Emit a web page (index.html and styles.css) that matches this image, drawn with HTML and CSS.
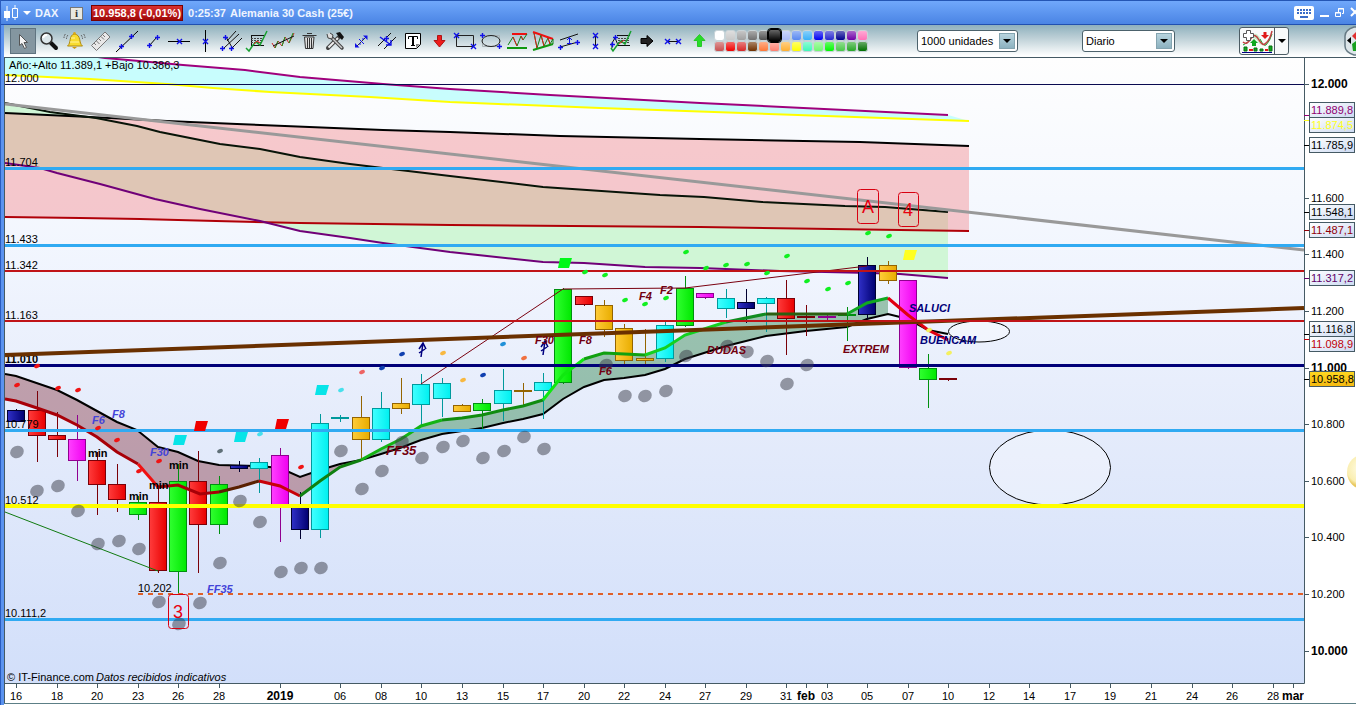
FILE: index.html
```html
<!DOCTYPE html>
<html lang="es">
<head>
<meta charset="utf-8">
<title>DAX - Alemania 30 Cash (25€)</title>
<link rel="stylesheet" href="styles.css">
</head>
<body>
<svg class="defs" width="0" height="0" aria-hidden="true">
  <defs>
    <g id="plus"><path d="M-2 .5H3M.5-2V3" stroke="#1010e8" stroke-width="1.400"/></g>
    <g id="cross"><path d="M-2-2L3 3M3-2L-2 3" stroke="#1010e8" stroke-width="1.400"/></g>
  </defs>
</svg>
<div class="window">
  <header class="titlebar">
    <svg class="logo" viewBox="0 0 18 18"><path d="M4 2v15M12 1v15" stroke="#fff"/><path d="M1 7h6v7H1z" fill="#fff"/><path d="M9.500 4.500h5v9h-5z" fill="#6098ee" stroke="#fff"/></svg>
    <button class="symbol" type="button"><span class="caret"></span>DAX</button>
    <button class="info" type="button" aria-label="Información">i</button>
    <strong class="quote">10.958,8 (-0,01%)</strong>
    <h1 class="title"><time>0:25:37</time> Alemania 30 Cash (25€)</h1>
    <div class="controls">
      <button type="button" class="keys" aria-label="Teclado"><svg viewBox="0 0 20 14"><rect width="20" height="14" rx="2" fill="#fff"/><path d="M3 4h14M3 7h14" stroke="#3a6cc8" stroke-width="2" stroke-dasharray="2 1"/><path d="M6 11h8" stroke="#3a6cc8" stroke-width="2"/></svg></button>
      <button type="button" aria-label="Minimizar"><svg viewBox="0 0 12 14"><path d="M1 10h9" stroke="#fff" stroke-width="2"/></svg></button>
      <button type="button" aria-label="Restaurar"><svg viewBox="0 0 12 14"><path d="M4.500 6V2.500h5v5H8M4 3h6M1.500 6.500h5v4h-5zM1 7h6" fill="none" stroke="#fff"/></svg></button>
      <button type="button" aria-label="Cerrar"><svg viewBox="0 0 12 14"><path d="M2 2l8 8M10 2L2 10" stroke="#fff" stroke-width="2"/></svg></button>
    </div>
  </header>

  <div class="frame">
  <nav class="toolbar" aria-label="Herramientas">
    <div class="tools">
      <button class="active" type="button" aria-label="Puntero"><svg viewBox="0 0 26 26"><path d="M9.500 6.500v11l2.500-2 2.500 5 2-1-2.500-5h3.500z" fill="#f4f4f4" stroke="#555"/></svg></button>
      <button type="button" aria-label="Zoom"><svg viewBox="0 0 26 26"><path d="M15 15l5 5" stroke="#111" stroke-width="4" stroke-linecap="round"/><circle cx="10.500" cy="10.500" r="5.500" fill="#dbe6ea" stroke="#333" stroke-width="1.500"/><path d="M7 10a4 4 0 014-3" stroke="#fff" stroke-width="2" fill="none"/></svg></button>
      <button type="button" aria-label="Alarma"><svg viewBox="0 0 26 26"><path d="M12.500 6c-6 1-3 9-7 12h15c-4-3-1-11-8-12z" fill="#f8dc30" stroke="#b08a10"/><path d="M8 14h9M9 10h4" stroke="#fff3a0"/><path d="M10 19h5l-2.500 2z" fill="#d09a10"/><circle cx="12.500" cy="5.500" r="1.500" fill="#d8a818"/><path d="M6 7q-1.500 1.500-1.500 4M3.500 6Q2 7.500 2 10M19 7q1.500 1.500 1.500 4M21.500 6q1.500 1.500 1.500 4" fill="none" stroke="#555" stroke-dasharray="2 1"/></svg></button>
      <button type="button" aria-label="Regla"><svg viewBox="0 0 26 26"><path d="M3.500 17.500L17 4l5 5L8.500 22.500z" fill="#e8e8e8" stroke="#777"/><path d="M6 15l2 2M8.500 13l3 3M11 11l2 2M13 8.500l3 3M15 7l2 2" stroke="#777"/></svg></button>
      <button type="button" aria-label="Recta"><svg viewBox="0 0 26 26"><path d="M2 24L24 3" stroke="#000"/><use href="#plus" x="7" y="18"/><use href="#plus" x="17" y="8"/></svg></button>
      <button type="button" aria-label="Segmento"><svg viewBox="0 0 26 26"><path d="M9 18l8-9" stroke="#000"/><use href="#plus" x="9" y="17"/><use href="#plus" x="17" y="9"/></svg></button>
      <button type="button" aria-label="Horizontal"><svg viewBox="0 0 26 26"><path d="M2 13.500h22" stroke="#000"/><use href="#cross" x="13" y="13"/></svg></button>
      <button type="button" aria-label="Vertical"><svg viewBox="0 0 26 26"><path d="M13.500 2v22" stroke="#000"/><use href="#cross" x="13" y="13"/></svg></button>
      <button type="button" aria-label="Tridente"><svg viewBox="0 0 26 26"><path d="M9 13L18 3M6 20L21 6M14 20L24 10M8 9l7 12" stroke="#111"/><use href="#plus" x="7" y="9"/><use href="#plus" x="4" y="20"/><use href="#plus" x="13" y="20"/></svg></button>
      <button type="button" aria-label="Regresión"><svg viewBox="0 0 26 26"><path d="M7 7.500h13M7 17.500h13M7.500 7v11" stroke="#111"/><path d="M7 10.500h12M7 12.500h12M7 14.500h12" stroke="#444" stroke-dasharray="2 1"/><path d="M2 20l3 3 4-6 3-3 4 3 7-14" fill="none" stroke="#18a030" stroke-width="1.500"/><path d="M10 16l3-3 3 2" stroke="#e02020" fill="none"/></svg></button>
      <button type="button" aria-label="Tendencia"><svg viewBox="0 0 26 26"><path d="M2 15l3 5 3-7 4 5 3-9 4 6 5-10" fill="none" stroke="#d42020"/><path d="M5 20l3-7M12 18l3-9M19 15l4-10" stroke="#149a20"/><path d="M3 18L24 8" stroke="#111"/></svg></button>
      <button type="button" aria-label="Papelera"><svg viewBox="0 0 26 26"><path d="M8.500 9h9.500l-1 11.500H9.500z" fill="#e0e0e0" stroke="#333"/><path d="M6.500 7.500h14M11 5.500h5M11.500 10v10M13.500 10v10M15.500 10v10" stroke="#333"/></svg></button>
      <button type="button" aria-label="Ajustes"><svg viewBox="0 0 26 26"><path d="M6 20L17 9" stroke="#444" stroke-width="4" stroke-linecap="round"/><path d="M6.500 19.500L16 10" stroke="#f0f0f0" stroke-width="2"/><path d="M9 9l11 11" stroke="#444" stroke-width="3.500" stroke-linecap="round"/><path d="M9 9l11 11" stroke="#ccc" stroke-width="1.500"/><path d="M5 6l1 4 4 1 1-4-3-2" fill="#ddd" stroke="#444"/><path d="M14 5l4-1 4 5-2 3-3-3z" fill="#111"/></svg></button>
      <button type="button" aria-label="Unir"><svg viewBox="0 0 26 26"><path d="M9 18l9-9" stroke="#333"/><path d="M7 15v4.500h4.500zM19.500 12V7.500H15z" fill="#1010e8"/><path d="M11 11l5 5M16 11h-2M11 16h2" stroke="#1010e8"/></svg></button>
      <button type="button" aria-label="Paralelas"><svg viewBox="0 0 26 26"><path d="M4 18L17 5M10 21L22 9" stroke="#111"/><path d="M6 9l11 8M17 12v5h-5" stroke="#1010e8" stroke-width="1.400" fill="none"/><use href="#plus" x="12" y="10"/></svg></button>
      <button type="button" aria-label="Texto"><svg viewBox="0 0 26 26"><path d="M5.500 5.500h15v11l-4 4h-11z" fill="#fff" stroke="#000"/><path d="M20 16h-4v4z" fill="#888"/><path d="M8.500 11V8.500h9V11M11 17.500h4" fill="none" stroke="#000"/><path d="M13 8v9.500" stroke="#000" stroke-width="2"/></svg></button>
      <button type="button" aria-label="Flecha abajo"><svg viewBox="0 0 26 26"><path d="M11.500 7.500h4v5H19L13.500 19 8 12.500h3.500z" fill="#ee1c1c" stroke="#b01414"/></svg></button>
      <button type="button" aria-label="Rectángulo"><svg viewBox="0 0 26 26"><path d="M4.500 7.500h17v11h-17z" fill="none" stroke="#222"/><use href="#cross" x="4" y="7"/><use href="#cross" x="21" y="18"/></svg></button>
      <button type="button" aria-label="Elipse"><svg viewBox="0 0 26 26"><path d="M4.500 7.500h17v11h-17z" fill="none" stroke="#aab4b8"/><ellipse cx="13" cy="13" rx="9" ry="5.500" fill="none" stroke="#222"/><use href="#plus" x="4" y="7"/><use href="#plus" x="21" y="18"/></svg></button>
      <button type="button" aria-label="Soporte"><svg viewBox="0 0 26 26"><path d="M8 6h15" stroke="#f01010" stroke-width="2"/><path d="M3 20h20" stroke="#109810" stroke-width="2"/><path d="M4 17l5-8 4 9 4-10 2 4 4-6" fill="none" stroke="#108018"/><path d="M9 9l4 9M17 8l2 4" stroke="#e01818"/></svg></button>
      <button type="button" aria-label="Triángulo"><svg viewBox="0 0 26 26"><path d="M3 4l20 7" stroke="#f01010" stroke-width="2"/><path d="M3 22l20-6" stroke="#109810" stroke-width="2"/><path d="M4 5l3 15 4-13 3 11 4-8 2 6 3-5v5" fill="none" stroke="#108018"/><path d="M4 5l3 15M11 7l3 11M18 10l2 6" stroke="#e01818"/></svg></button>
      <button type="button" aria-label="Canal"><svg viewBox="0 0 26 26"><path d="M4 12L22 6M4 19l18-5" stroke="#111"/><use href="#plus" x="4" y="19"/><use href="#plus" x="21" y="14"/><path d="M13.500 10v6M11 12l2.500-2.500L16 12M11 15.500h5" fill="none" stroke="#1010e8"/></svg></button>
      <button type="button" aria-label="Medida vertical"><svg viewBox="0 0 26 26"><path d="M13.500 7v12" stroke="#111"/><use href="#cross" x="13" y="7"/><use href="#cross" x="13" y="18"/></svg></button>
      <button type="button" aria-label="Estudio"><svg viewBox="0 0 26 26"><path d="M4 20V15l3-5 3 7M9 7.500h13M9 17.500h13" stroke="#111" fill="none"/><path d="M10 10.500h12M10 12.500h12M10 14.500h12" stroke="#444" stroke-dasharray="2 1"/><path d="M3 20l2 3 5-7 3-3 4 3 6-13" fill="none" stroke="#18a030" stroke-width="1.500"/><path d="M11 16l5-4" stroke="#e02020"/><use href="#plus" x="7" y="9"/><use href="#plus" x="4" y="16"/></svg></button>
      <button type="button" aria-label="Flecha derecha"><svg viewBox="0 0 26 26"><path d="M7 10.500h6V7.500l6 5.500-6 5.500v-3H7z" fill="#222" stroke="#000"/></svg></button>
      <button type="button" aria-label="Medida horizontal"><svg viewBox="0 0 26 26"><path d="M7 13.500h12" stroke="#111"/><use href="#cross" x="7" y="13"/><use href="#cross" x="18" y="13"/></svg></button>
      <button type="button" aria-label="Flecha arriba"><svg viewBox="0 0 26 26"><path d="M11.500 18.500h4v-6H19L13.500 6.500 8 12.500h3.500z" fill="#28dc28" stroke="#28c828"/></svg></button>
    </div>
    <div class="palette" id="palette"></div>
    <label class="combo units"><select aria-label="Unidades"><option>1000 unidades</option></select><span class="drop"></span></label>
    <label class="combo period"><select aria-label="Periodo"><option>Diario</option></select><span class="drop"></span></label>
    <div class="split">
      <button type="button" aria-label="Añadir indicador"><svg viewBox="0 0 34 26"><path d="M3 17q6-2 10-9t10 9q5-1 9-12-1 8-6 12-6 2-9-5-5-4-7 0t-7 5z" fill="#c8ecc8"/><path d="M3 17q6-2 9-8M20 11q4 8 6 6 4-4 6-11" fill="none" stroke="#18a030"/><path d="M3 14q4 4 9-5 3-4 7 3t7 3q4-3 6-12" fill="none" stroke="#c04040" stroke-width="1.500"/><path d="M6.500 2.500h4v3h3v4h-3v3h-4v-3h-3v-4h3z" fill="#fff" stroke="#555"/><path d="M12 18v-3h-2l4-4 4 4h-2v3z" fill="#10a820"/><path d="M23.500 4h3v3H29l-4 4-4-4h2.500z" fill="#e01818"/><path d="M4 23v-4h3v4zM14 23v-3h3v3zM20 23v-2h3v2zM29 23v-5h3v5z" fill="#10a820" stroke="#087010"/><path d="M9 21h4v2H9zM25 21h3v2h-3z" fill="#e01818"/><path d="M2 24.500h30" stroke="#000080"/></svg></button>
      <button type="button" class="more" aria-label="Más indicadores"><span class="caret dark"></span></button>
    </div>
    <button class="side" type="button" aria-label="Panel lateral"><svg viewBox="0 0 30 30"><path d="M10 1h20v28H10Q1 26 1 20V10Q1 4 10 1z" fill="#dde6ea" stroke="#667a84" stroke-width="1.500"/><path d="M7 11v7l-4-3.500z" fill="#000"/><path d="M8 10l4-4v8z" fill="#e03030"/><path d="M8 18l4-3v10H9z" fill="#18a020"/></svg></button>
  </nav>
  <main class="chart">
    <svg id="plot" viewBox="4 58 1352 647" role="img" aria-label="Gráfico diario DAX">
      <defs>
        <linearGradient id="sky" x1="0" y1="0" x2="0" y2="1"><stop offset="0" stop-color="#fefefe"/><stop offset=".3" stop-color="#f2f6fe"/><stop offset=".6" stop-color="#e4ebfb"/><stop offset="1" stop-color="#d2dffa"/></linearGradient>
        <linearGradient id="tag" x1="0" y1="0" x2="1" y2="1"><stop offset="0" stop-color="#fff"/><stop offset="1" stop-color="#ccdaf2"/></linearGradient>
        <linearGradient id="gold" x1="0" y1="0" x2="0" y2="1"><stop offset="0" stop-color="#ffd820"/><stop offset="1" stop-color="#f4b810"/></linearGradient>
        <radialGradient id="sun" cx=".4" cy=".4"><stop offset="0" stop-color="#fffde8"/><stop offset=".8" stop-color="#faeeb0"/><stop offset="1" stop-color="#e8c860"/></radialGradient>
        <clipPath id="area"><path d="M5 58h1299v625H5z"/></clipPath>
        <clipPath id="dates"><path d="M5 684h1299v20H5z"/></clipPath>
      </defs>
      <path d="M5 58h1299v625H5z" fill="url(#sky)"/>
      <g clip-path="url(#area)">
        <g id="bands"></g>
        <g id="candles"></g>
        <g id="averages"></g>
        <g class="level">
          <text x="5" y="82">12.000</text><text x="5" y="166">11.704</text><text x="5" y="243">11.433</text><text x="5" y="269">11.342</text><text x="5" y="319">11.163</text><text x="5" y="363" class="strong">11.010</text><text x="5" y="428">10.779</text><text x="5" y="504">10.512</text><text x="138" y="592">10.202</text><text x="5" y="617">10.111,2</text>
          <text x="9" y="69">Año:+Alto 11.389,1 +Bajo 10.386,3</text>
        </g>
        <g fill="none">
          <ellipse cx="979" cy="331.500" rx="30.500" ry="10.500" stroke="#000" fill="#ffffff4d"/>
          <ellipse cx="1050" cy="467.500" rx="60.500" ry="37.500" stroke="#000" fill="#ffffff4d"/>
          <path d="M421 384L563 289L685 288L867 266" stroke="#7a0010" stroke-width="1"/>
          <path d="M5 512L158 571" stroke="#107a10"/>
          <path d="M5 104L1304 250" stroke="#999" stroke-width="3"/>
          <path d="M5 355L1304 308" stroke="#6a3000" stroke-width="4"/>
          <path d="M138 594H1304" stroke="#e06028" stroke-width="2" stroke-dasharray="5 5"/>
          <path d="M5 84.500H1304" stroke="#0a0a50"/>
          <path d="M5 168.500H1304M5 245.500H1304M5 430.500H1304M5 619.500H1304" stroke="#30aaf2" stroke-width="3"/>
          <path d="M5 271H1304M5 321H1304" stroke="#c01418" stroke-width="2"/>
          <path d="M5 365.500H1304" stroke="#000078" stroke-width="3"/>
          <path d="M5 506H1304" stroke="#ff0" stroke-width="4"/>
          <path d="M421 357l2-14M543 355l2-14M419 349l4-6 3 6M541 347l4-6 3 6M419 353l6-4M541 351l6-4" stroke="#000080" stroke-width="1.500"/>
        </g>
        <g id="dots"></g>
        <g class="note wine"><text x="535" y="344">F30</text><text x="579" y="344">F8</text><text x="599" y="375">F6</text><text x="639" y="300">F4</text><text x="660" y="294">F2</text><text x="707" y="354">DUDAS</text><text x="843" y="353">EXTREM</text><text x="386" y="455" class="big">FF35</text></g>
        <g class="note navy"><text x="909" y="312">SALUCI</text><text x="920" y="344">BUENCAM</text></g>
        <g class="note blue"><text x="92" y="424">F6</text><text x="112" y="418">F8</text><text x="150" y="456">F30</text><text x="207" y="593">FF35</text></g>
        <g class="min"><text x="88" y="457">min</text><text x="129" y="500">min</text><text x="149" y="489">min</text><text x="169" y="469">min</text></g>
        <g class="wave"><rect x="857.500" y="189.500" width="21" height="34" rx="3"/><text x="868" y="213">A</text><rect x="898.500" y="192.500" width="20" height="34" rx="3"/><text x="908" y="216">4</text><rect x="168.500" y="594.500" width="20" height="34" rx="3"/><text x="178" y="618">3</text></g>
        <text x="7" y="681" class="credit">© IT-Finance.com</text><text x="96" y="681" class="slant">Datos recibidos indicativos</text>
      </g>
      <path d="M4.500 683.500H1304.500V58M4.500 58V703" fill="none" stroke="#455a64"/>
      <g id="axes"></g>
      <path d="M4 703.500H1356" stroke="#5c7f86"/>
      <circle cx="1365" cy="472" r="18" fill="url(#sun)"/>
    </svg>
  </main>
  </div>
</div>
<script src="script.js"></script>
</body>
</html>
```
FILE: styles.css
```css
* { box-sizing: border-box; }
body { margin: 0; font: 11px "Liberation Sans", Arial, sans-serif; color: #000; }
button { padding: 0; border: 0; background: none; font: inherit; color: inherit; }
.defs { position: absolute; }
.window { display: flex; flex-direction: column; height: 100vh; overflow: hidden; border-left: 1px solid #2a5cc0; }
.titlebar { display: flex; align-items: center; flex: none; height: 25px; padding: 2px 0 1px 2px; border-top: 1px solid #2456b4; border-bottom: 1px solid #2050b0; background: linear-gradient(#70a8fb, #4a84e4); color: #eef4ff; font-weight: bold; overflow: hidden; }
.logo { width: 18px; height: 18px; }
.symbol { display: flex; align-items: center; gap: 4px; margin-left: 2px; width: 44px; font-weight: bold; }
.caret { border: 4px solid transparent; border-top-color: #fff; border-bottom: 0; }
.caret.dark { border-top-color: #000; }
.info { width: 11px; height: 11px; margin-left: 4px; background: #e8e8e0; color: #333; font: bold 11px/11px "Liberation Serif", serif; outline: 1px solid #777; }
.quote { margin-left: 9px; padding: 0 1px; border: 1px solid #700; background: linear-gradient(#d83030, #a00808); color: #fff; line-height: 14px; }
.title { display: flex; gap: 4px; margin: 0 0 0 5px; font-size: 11px; }
.controls { display: flex; align-items: center; gap: 3px; margin: 0 -5px 0 auto; }
.controls svg { display: block; width: 12px; height: 14px; }
.controls .keys { margin-right: 2px; }
.controls .keys svg { width: 20px; }
.frame { display: flex; flex-direction: column; flex: 1; min-height: 0; padding-left: 3px; background: #5b93ef; }
.toolbar { display: flex; align-items: center; flex: none; height: 33px; padding: 0 0 1px 6px; border-bottom: 1px solid #455a64; background: linear-gradient(#8eb0bd, #bccfd6 40%, #fdfefe 95%); overflow: hidden; }
.toolbar > * { flex: none; }
.tools { display: flex; }
.tools button, .tools svg { display: block; width: 26px; height: 26px; }
.tools .active { background: #8496a0; outline: 1px solid #607480; outline-offset: -1px; }
.palette { display: grid; grid-template-columns: repeat(14, 11px); margin-left: 2px; }
.swatch { height: 11px; border: 1px solid #c8d4d8; border-radius: 3px; background: linear-gradient(#ffffff66, #ffffff00) var(--ink); }
.swatch.on { position: relative; z-index: 1; margin: -1px; height: 13px; outline: 1px solid #000; border-color: #000; }
.combo { position: relative; height: 22px; border: 1px solid #4c626c; border-radius: 3px; background: #fff; }
.units { width: 101px; margin-left: 49px; }
.period { width: 93px; margin-left: 64px; }
.combo select { width: 100%; height: 20px; padding: 0 3px; border: 0; background: none; appearance: none; font: 11px "Liberation Sans", Arial, sans-serif; color: #000; }
.drop { position: absolute; top: 2px; right: 2px; width: 16px; height: 16px; border: 1px solid #84a4b0; background: linear-gradient(#b8d4de, #8cb2c0); pointer-events: none; }
.drop::after { content: ""; position: absolute; top: 5px; left: 3px; border: 4px solid transparent; border-top-color: #000; border-bottom: 0; }
.split { display: flex; height: 28px; margin-left: 64px; border: 1px solid #4c5c64; border-radius: 3px; background: #f8fafa; }
.split svg { display: block; width: 34px; height: 26px; }
.more { display: grid; place-items: center; width: 14px; border-left: 1px solid #4c5c64; }
.side { margin-left: 55px; }
.side svg { display: block; width: 30px; height: 30px; }
.chart { flex: 1; min-height: 0; background: #fff; }
.chart svg { display: block; width: 100%; height: 100%; }
.chart text { font: 11px "Liberation Sans", Arial, sans-serif; }
.chart .strong, .chart .min text, .chart .major { font-weight: bold; }
.chart .major { font-size: 12px; }
.chart .note text { font-weight: bold; font-style: italic; }
.chart .note .big { font-size: 13px; }
.wine { fill: #720010; }
.navy { fill: #000078; }
.blue { fill: #4444d8; }
.wave rect { fill: none; stroke: #d80010; }
.chart .wave text { fill: #e80010; font-size: 18px; text-anchor: middle; }
.chart .slant { font-style: italic; }
.date { text-anchor: middle; }
```
FILE: script.js
```javascript
const el = id => document.getElementById(id);
const put = (id, html) => { el(id).innerHTML += html; };

// Colour palette of the drawing tools
const inks = ('fff c8c8c8 a0a0a0 707070 505050 000 a8b8f8 5888f0 38b0f8 0000f0 2828d0 000090 7000a8 ff70b8 ' +
  'c85050 f00000 d82828 703000 ff7838 ff8070 ffb030 ffff00 40f8b8 70f870 00f800 48c848 28a828 007000').split(' ');
inks.forEach((c, i) => put('palette',
  `<button type="button" class="swatch${i === 5 ? ' on' : ''}" style="--ink:#${c}" aria-label="Color #${c}"></button>`));

// Curves as x,y pairs
const curves = {
  top: '5,44 105,58 128,60 183,65 245,70 300,77 383,84 450,89 550,95 700,103 948,115',
  yellow: '5,75 90,79 167,84 213,88 270,92 370,97 450,102 600,108 969,121',
  upper: '5,113 90,117 167,121 237,124 383,130 450,132 560,136 700,139 860,142 969,146',
  lower: '5,217 80,218 140,219 216,221 300,223 450,225 700,227 969,231',
  dark: '5,103 50,112 96,118 137,126 160,132 220,144 260,149 300,157 350,164 383,168 450,176 543,187 660,195 704,197 762,202 845,206 885,207 948,212',
  violet: '5,163 40,168 57,173 100,184 155,199 200,209 260,221 300,231 350,238 383,243 450,252 543,262 584,263 645,267 700,268 780,271 870,273 900,274 948,278',
  slow: '5,374 16,376 57,390 77,400 97,411 117,422 137,430 158,447 178,452 198,461 219,465 259,466 280,468 300,477 320,470 340,464 361,460 381,454 400,448 421,440 442,434 482,428 503,423 523,419 543,414 563,399 584,387 604,380 624,378 645,375 665,369 685,359 726,346 766,336 806,331 847,327 867,319 888,314 908,319 928,330 948,334',
  fast: '5,399 16,401 37,408 57,415 77,425 97,437 117,452 138,464 158,487 178,485 200,494 219,492 239,487 259,481 280,486 300,496 320,481 340,467 361,460 381,449 401,439 421,426 442,420 462,418 482,415 503,410 523,406 543,400 563,375 584,359 604,353 645,355 665,348 685,335 726,322 766,314 847,314 867,303 888,298 908,315 928,330 948,340'
};
const cut = (name, from, to) => curves[name].split(' ').filter(p => parseInt(p) >= from && parseInt(p) <= to);
const area = (a, b, color, from = 0, to = 1000) =>
  `<polygon points="${cut(a, from, to).concat(cut(b, from, to).reverse()).join(' ')}" fill="${color}"/>`;
const line = (name, color, width = 2, from = 0, to = 1000) =>
  `<polyline points="${cut(name, from, to).join(' ')}" fill="none" stroke="${color}" stroke-width="${width}"/>`;
put('bands',
  area('top', 'yellow', '#c8fdfd') +
  area('dark', 'violet', '#d0f6d6') +
  area('upper', 'lower', 'rgba(243,130,135,.42)') +
  line('top', '#a0007c') + line('yellow', '#ff0') + line('upper', '#000') +
  line('lower', '#b00008') + line('dark', '#081408') + line('violet', '#700078') +
  area('slow', 'fast', 'rgba(120,20,30,.36)', 0, 361) +
  area('slow', 'fast', 'rgba(10,110,40,.37)', 361, 888) +
  line('slow', '#000'));

// Candles: x, open/close edges, high, low, colour key
const paint = {
  r: ['#ff3c3c', '#e80000', '#7a0008'], g: ['#30ff30', '#00e800', '#009010'], c: ['#40ffff', '#00f0f0', '#00999c'],
  n: ['#3030c8', '#000070', '#000030'], m: ['#ff40ff', '#f000f0', '#900090'], o: ['#ffcc38', '#e8ac00', '#946400']
};
for (const k in paint) put('candles',
  `<linearGradient id="c-${k}"><stop stop-color="${paint[k][0]}"/><stop offset="1" stop-color="${paint[k][1]}"/></linearGradient>`);
const candles = `16 410 421 409 421 n;37 410 435 391 462 r;57 435 439 412 457 r;77 439 460 415 481 m;97 460 484 452 515 r;
117 484 499 464 512 r;138 502 514 496 520 g;158 502 570 488 573 r;178 481 571 464 593 g;198 481 524 451 573 r;219 484 524 476 534 g;
239 465 468 461 472 n;259 462 468 458 493 c;280 455 504 448 542 m;300 504 529 492 539 n;320 423 529 414 538 c;340 417 418 415 422 c;
361 417 439 396 460 o;381 408 439 392 442 c;401 403 408 378 414 o;421 384 404 374 425 c;442 383 398 378 417 c;462 405 411 404 412 o;
482 403 410 399 429 g;503 390 403 369 421 c;523 390 391 383 407 o;543 382 390 373 419 c;563 289 382 288 384 g;584 296 304 296 306 r;
604 305 329 300 337 o;624 328 360 324 364 o;645 358 360 329 364 o;665 325 358 322 362 c;685 288 325 276 327 g;705 293 297 293 299 m;
726 298 308 289 318 c;746 302 308 289 323 n;766 298 303 297 332 c;786 298 318 280 355 r;806 316 317 305 336 r;827 316 317 315 320 m;
847 314 315 307 341 g;867 265 314 257 319 n;888 265 280 261 284 o;908 280 367 280 369 m;928 368 379 354 408 g;948 378 379 378 381 r`;
candles.split(';').forEach(row => {
  const [x, t, b, hi, lo, k] = row.trim().split(' ');
  const edge = paint[k][2];
  put('candles', `<path d="M${+x + .5} ${hi}V${lo}" stroke="${edge}"/>` +
    `<rect x="${x - 8.5}" y="${+t + .5}" width="17" height="${b - t}" fill="url(#c-${k})" stroke="${edge}"/>`);
});

put('averages',
  line('fast', '#a80008', 3, 0, 138) + line('fast', '#f01010', 3, 138, 158) + line('fast', '#a80008', 3, 158, 219) +
  line('fast', '#5a2000', 3, 219, 259) + line('fast', '#c80008', 3, 259, 300) + line('fast', '#108010', 3, 300, 361) +
  line('fast', '#14b414', 3, 361, 442) + line('fast', '#108c10', 3, 442, 543) + line('fast', '#10e810', 3, 543, 584) +
  line('fast', '#10a010', 3, 584, 645) + line('fast', '#14d020', 3, 645, 726) + line('fast', '#108c20', 3, 726, 766) +
  line('fast', '#2a6010', 3, 766, 847) + line('fast', '#10a820', 3, 847, 888) + line('fast', '#e00010', 3, 888, 948));

// Markers
const pairs = s => s.split(' ').map(p => p.split(','));
const blob = (s, rx, ry, color) => put('dots', pairs(s).map(([x, y]) =>
  `<ellipse cx="${x}" cy="${y}" rx="${rx}" ry="${ry}" fill="${color}" transform="rotate(-25 ${x} ${y})"/>`).join(''));
blob('17,452 37,491 58,486 78,511 240,501 260,522 341,451 98,544 119,541 139,549 159,602 200,603 220,563 281,572 301,568 321,568 179,624 362,489 382,471 402,442 422,458 443,447 463,441 483,458 504,451 524,437 544,449 606,365 625,396 645,396 666,391 686,356 727,346 747,352 767,361 787,384 807,365', 7, 6, 'rgba(58,60,72,.5)');
const small = {
  '#f01414': '17,385 37,366 58,388 78,390 98,428 117,440 139,471 159,461 301,467', '#607078': '220,451',
  '#48e0ec': '260,434 341,390', '#ee6464': '362,372', '#1040b0': '382,368 402,354 483,375', '#f8b840': '443,353 463,380',
  '#2090d8': '503,344', '#f07040': '524,358',
  '#10f020': '585,272 605,275 625,300 645,304 666,298 686,252 706,268 726,265 747,264 767,273 787,256 807,281 828,289 848,283 868,233 889,236',
  '#f4f060': '929,330 949,353'
};
for (const color in small) blob(small[color], 3, 2, color);
const flags = { '#f00000': '201,426 282,424', '#08e4e8': '180,440 241,437 322,390', '#00f818': '565,263', '#ffff20': '910,255' };
for (const color in flags) put('dots', pairs(flags[color]).map(([x, y]) =>
  `<path d="M${x - 5} ${y - 5}h12l-3 10h-11z" fill="${color}"/>`).join(''));

// Price axis
const prices = { '12.000': 84, '11.600': 198, '11.400': 254, '11.200': 311, '11.000': 368, '10.800': 424, '10.600': 481, '10.400': 537, '10.200': 594, '10.000': 651 };
for (const p in prices) {
  const major = ['12.000', '11.000', '10.000'].includes(p);
  put('axes', `<path d="M1304 ${prices[p] + .5}h5" stroke="#455a64"/><text x="1311" y="${prices[p] + 4}"${major ? ' class="major"' : ''}>${p}</text>`);
}
[['11.889,8', 110, '#900070', 115], ['11.874,5', 125, '#ffff20', 120], ['11.785,9', 145, '#000', 145], ['11.548,1', 212, '#000', 212],
 ['11.487,1', 230, '#900008', 230], ['11.317,2', 278, '#600068', 278], ['11.116,8', 329, '#000', 334], ['11.098,9', 344, '#c00008', 339],
 ['10.958,8', 379, '#000', 379]].forEach(([t, y, color, tick]) => put('axes',
  `<path d="M1304 ${tick + .5}h5" stroke="${color}"/><rect x="1309.5" y="${y - 7.5}" width="45" height="15" fill="url(#${t === '10.958,8' ? 'gold' : 'tag'})" stroke="#455a64"/>` +
  `<text x="1311" y="${y + 4}" fill="${color}">${t}</text>`));

// Time axis
const dates = '16:16 57:18 97:20 138:23 178:26 219:28 280:2019 340:06 381:08 421:10 462:13 503:15 543:17 584:20 624:22 665:24 705:27 746:29 786:31 806:feb 827:03 867:05 908:07 948:10 989:12 1029:14 1070:17 1110:19 1151:21 1192:24 1232:26 1273:28 1293:mar';
put('axes', '<g clip-path="url(#dates)">' + dates.split(' ').map(d => {
  const [x, t] = d.split(':');
  return `<path d="M${+x + .5} 684v4" stroke="#455a64"/><text x="${x}" y="700" class="date${t.length > 2 ? ' major' : ''}">${t}</text>`;
}).join('') + '</g>');
```
